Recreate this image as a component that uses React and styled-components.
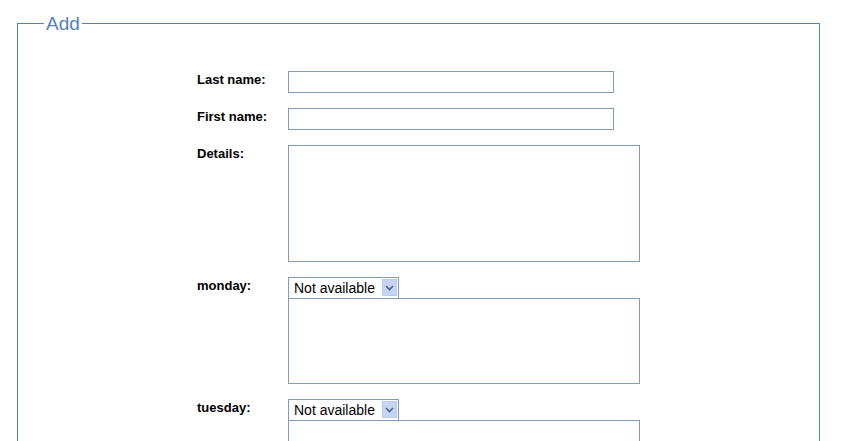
import React from 'react';
import styled, { createGlobalStyle } from 'styled-components';

const GlobalStyle = createGlobalStyle`
  html, body {
    margin: 0;
    padding: 0;
    background: #fff;
    overflow: hidden;
  }
  body {
    font-family: "Liberation Sans", Arial, sans-serif;
  }
`;

const days = ['monday', 'tuesday'];

const App = () => {
    return (
        <>
            <GlobalStyle />
            <Fieldset>
                <Legend>Add</Legend>
                <FormGrid>
                    <Label>Last name:</Label>
                    <div><TextInput type="text" /></div>

                    <Label>First name:</Label>
                    <div><TextInput type="text" /></div>

                    <Label>Details:</Label>
                    <div><TextArea $height={117} /></div>

                    {days.map((day) => (
                        <React.Fragment key={day}>
                            <Label>{day}:</Label>
                            <DayBlock>
                                <SelectWrap>
                                    <Select defaultValue="na">
                                        <option value="na">Not available</option>
                                        <option value="am">Morning</option>
                                        <option value="pm">Afternoon</option>
                                    </Select>
                                    <ArrowButton>
                                        <svg width="9" height="6" viewBox="0 0 9 6">
                                            <path d="M1 1 L4.5 4.5 L8 1" fill="none" stroke="#4d6185" strokeWidth="1.6" />
                                        </svg>
                                    </ArrowButton>
                                </SelectWrap>
                                <TextArea $height={86} $joined />
                            </DayBlock>
                        </React.Fragment>
                    ))}
                </FormGrid>
            </Fieldset>
        </>
    );
};

const Fieldset = styled.fieldset`
  margin: 13px 25px 0 17px;
  padding: 37px 0 40px 0;
  border: 1px solid #5580bd;
  min-width: 0;
`;

const Legend = styled.legend`
  margin-left: 26px;
  padding: 0 2px;
  font-family: "Liberation Sans", Arial, sans-serif;
  font-size: 19px;
  line-height: 21px;
  color: #5580bd;
`;

const FormGrid = styled.div`
  display: grid;
  grid-template-columns: 91px 352px;
  row-gap: 15px;
  justify-content: center;
`;

const Label = styled.div`
  font-size: 13px;
  font-weight: bold;
  line-height: 15px;
  padding-top: 1px;
  color: #000;
`;

const TextInput = styled.input`
  display: block;
  box-sizing: border-box;
  width: 326px;
  height: 22px;
  margin: 0;
  border: 1px solid #7f9db9;
  padding: 2px 3px;
  font-family: "Liberation Sans", Arial, sans-serif;
  font-size: 13px;
  outline: none;
`;

const TextArea = styled.textarea`
  display: block;
  box-sizing: border-box;
  width: 352px;
  height: ${(p) => p.$height}px;
  margin: 0;
  margin-top: ${(p) => (p.$joined ? '-1px' : '0')};
  border: 1px solid #7f9db9;
  padding: 2px;
  resize: none;
  font-family: "Liberation Sans", Arial, sans-serif;
  font-size: 13px;
  outline: none;
`;

const DayBlock = styled.div`
  display: flex;
  flex-direction: column;
`;

const SelectWrap = styled.div`
  position: relative;
  width: 111px;
  height: 22px;
`;

const Select = styled.select`
  appearance: none;
  -webkit-appearance: none;
  box-sizing: border-box;
  width: 111px;
  height: 22px;
  margin: 0;
  border: 1px solid #7f9db9;
  border-radius: 0;
  background: #fff;
  padding: 0 0 0 5px;
  font-family: "Liberation Sans", Arial, sans-serif;
  font-size: 14px;
  color: #000;
  outline: none;
`;

const ArrowButton = styled.span`
  position: absolute;
  top: 2px;
  right: 2px;
  width: 15px;
  height: 17px;
  box-sizing: border-box;
  border: 1px solid #b9cbef;
  background: #c6d5f5;
  display: flex;
  align-items: center;
  justify-content: center;
  pointer-events: none;
`;

export default App;
